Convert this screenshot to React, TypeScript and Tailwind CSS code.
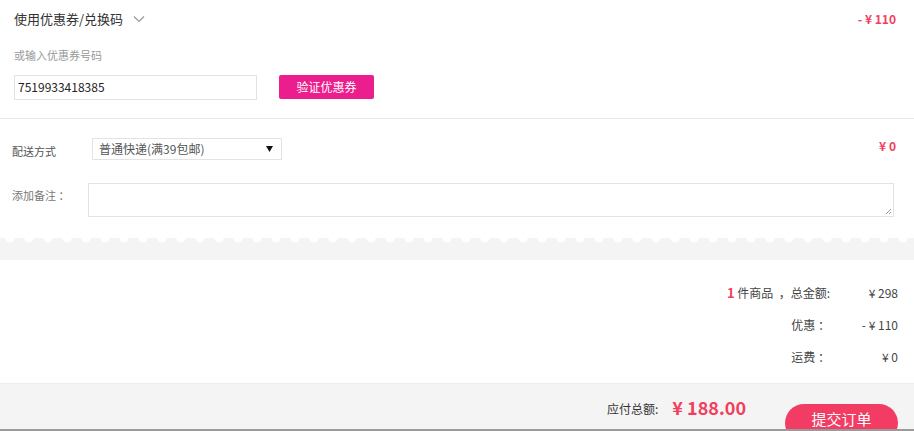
const font = "font-['Microsoft_YaHei','Noto_Sans_CJK_SC',sans-serif]";

function SummaryRow({ label, value }: { label: React.ReactNode; value: string }) {
  return (
    <div className="flex justify-end items-center h-[32px] text-[12px] text-[#444]">
      <div className="text-right">{label}</div>
      <div className="w-[68px] text-right">{value}</div>
    </div>
  );
}

export default function App() {
  return (
    <div className={`w-[914px] h-[431px] overflow-hidden bg-white ${font}`}>
      {/* coupon */}
      <div className="px-[14px] border-b border-[#e8e8e8] h-[119px]">
        <div className="flex justify-between items-center h-[37px]">
          <div className="flex items-center text-[13px] text-[#333]">
            使用优惠券/兑换码
            <svg className="ml-[10px]" width="12" height="8" viewBox="0 0 12 8">
              <path d="M1 1.5L6 6.5L11 1.5" fill="none" stroke="#999" strokeWidth="1.2" />
            </svg>
          </div>
          <span className="text-[12px] font-bold text-[#f0405e] pr-[4px]">- ¥ 110</span>
        </div>
        <div className="text-[11px] text-[#999] mt-[10px]">或输入优惠券号码</div>
        <div className="flex items-center mt-[11px]">
          <div className="w-[243px] h-[25px] border border-[#e3e3e3] flex items-center pl-[3px] text-[12px] text-[#222]">
            7519933418385
          </div>
          <button className="ml-[22px] w-[95px] h-[24px] bg-[#ec1d8c] text-white text-[12px] rounded-[2px]">
            验证优惠券
          </button>
        </div>
      </div>

      {/* delivery */}
      <div className="px-[12px] h-[119px] pt-[19px]">
        <div className="flex items-center">
          <span className="w-[80px] text-[11px] text-[#555] mt-[4px]">配送方式</span>
          <div className="w-[190px] h-[22px] border border-[#e3e3e3] flex items-center justify-between pl-[6px] pr-[8px] text-[12px] text-[#555]">
            <span>普通快递(满39包邮)</span>
            <svg width="7" height="6" viewBox="0 0 7 6">
              <path d="M0 0H7L3.5 6Z" fill="#111" />
            </svg>
          </div>
          <span className="ml-auto text-[12px] font-bold text-[#f0405e] pr-[6px] -mt-[6px]">¥ 0</span>
        </div>
        <div className="flex items-start mt-[23px]">
          <span className="w-[76px] text-[11px] text-[#777] mt-[4px]">添加备注 ：</span>
          <div className="relative w-[806px] h-[34px] border border-[#e3e3e3]">
            <svg className="absolute right-[1px] bottom-[1px]" width="7" height="7" viewBox="0 0 7 7">
              <path d="M6 1L1 6M6 4L4 6" stroke="#999" strokeWidth="1" />
            </svg>
          </div>
        </div>
      </div>

      {/* wave + gap */}
      <div className="h-[5px] bg-[#f4f4f4] bg-[radial-gradient(circle_at_10px_0,#fff_4px,transparent_5px)] bg-[length:19px_5px]" />
      <div className="h-[17px] bg-[#f4f4f4]" />

      {/* summary */}
      <div className="h-[123px] pt-[17px] pr-[16px]">
        <SummaryRow
          label={
            <span>
              <span className="text-[#f0405e] font-bold text-[13px]">1</span> 件商品 &nbsp;，总金额:
            </span>
          }
          value="¥ 298"
        />
        <SummaryRow label="优惠 ：" value="- ¥ 110" />
        <SummaryRow label="运费 ：" value="¥ 0" />
      </div>

      {/* footer */}
      <div className="h-[48px] bg-[#f4f4f4] border-t border-[#ececec] flex items-start pr-[16px] relative">
        <div className="ml-auto flex items-center h-[44px] mt-[1px]">
          <span className="text-[12px] text-[#333] mt-[4px]">应付总额:</span>
          <span className="ml-[14px] text-[18px] font-bold text-[#f0405e]">¥ 188.00</span>
        </div>
        <button className="ml-[39px] mt-[20px] w-[113px] h-[38px] rounded-full bg-[#f23c63] text-white text-[15px] pb-[8px]">
          提交订单
        </button>
        <div className="absolute left-0 right-0 bottom-0 h-[2px] bg-[#9a9a9a]" />
      </div>
    </div>
  );
}
